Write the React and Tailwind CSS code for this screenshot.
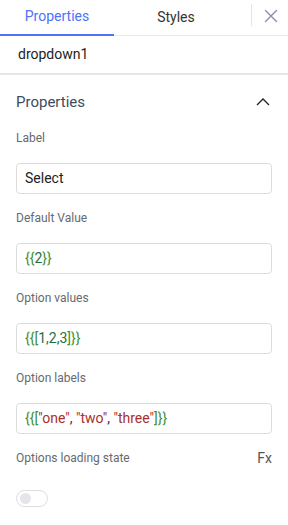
import React from "react";

const font = { fontFamily: "Roboto, 'Noto Sans', sans-serif" };

function Field({ label, children }) {
  return (
    <div className="flex flex-col">
      <div className="h-[16px] text-[12px] leading-[16px] text-[#666a70]">{label}</div>
      <div className="mt-[17px] mb-[16px] h-[31px] rounded-[4px] border border-[#dcdcdc] bg-white flex items-center px-[8px] text-[14px]">
        <span className="whitespace-pre">{children}</span>
      </div>
    </div>
  );
}

const G = ({ children }) => <span className="text-[#3d8f2f]">{children}</span>;
const N = ({ children }) => <span className="text-[#1f6e45]">{children}</span>;
const S = ({ children }) => <span className="text-[#a6302b]">{children}</span>;
const P = ({ children }) => <span className="text-[#333]">{children}</span>;

export default function App() {
  return (
    <div className="w-[288px] h-[525px] bg-white overflow-hidden" style={font}>
      {/* tabs */}
      <div className="relative h-[36px] flex items-stretch border-b border-[#e8e8e8]">
        <div className="w-[114px] flex items-center justify-center text-[14px] text-[#4d73f8] border-b-2 border-[#4d73f8] -mb-[1px] pb-[1px]">
          Properties
        </div>
        <div className="w-[124px] flex items-center justify-center text-[14px] text-[#333]">Styles</div>
        <div className="flex-1 flex items-center">
          <div className="ml-[13px] h-[22px] w-px bg-[#e5e5e5] -mt-[5px]" />
          <div className="flex-1 flex items-center justify-center -mt-[4px] pl-[1px]">
            <svg width="14" height="14" viewBox="0 0 14 14" fill="none" stroke="#8690a8" strokeWidth="1.4" strokeLinecap="round">
              <path d="M1.5 1.5 L12.5 12.5 M12.5 1.5 L1.5 12.5" />
            </svg>
          </div>
        </div>
      </div>
      {/* component name */}
      <div className="h-[39px] flex items-center pl-[18px] text-[14px] text-[#222] border-b-2 border-[#e6e6e6]">
        dropdown1
      </div>
      {/* section */}
      <div className="pl-[15px] pr-[16px] pt-[17px]">
        <div className="h-[20px] flex items-center justify-between pl-[1px]">
          <span className="text-[15px] text-[#3e4c5c]">Properties</span>
          <svg width="14" height="8" viewBox="0 0 14 8" fill="none" stroke="#222" strokeWidth="1.3" className="mr-[2px]">
            <path d="M1 7 L7 1 L13 7" />
          </svg>
        </div>
        <div className="mt-[18px] pl-[1px]">
          <Field label="Label">
            <span className="text-[#222]">Select</span>
          </Field>
          <Field label="Default Value">
            <G>{"{{"}</G>
            <N>2</N>
            <G>{"}}"}</G>
          </Field>
          <Field label="Option values">
            <G>{"{{["}</G>
            <N>1,2,3</N>
            <G>{"]}}"}</G>
          </Field>
          <Field label="Option labels">
            <G>{"{{["}</G>
            <S>"one"</S>
            <P>{", "}</P>
            <S>"two"</S>
            <P>{", "}</P>
            <S>"three"</S>
            <G>{"]}}"}</G>
          </Field>
          <div className="h-[16px] flex items-center justify-between text-[12px] text-[#666a70]">
            <span>Options loading state</span>
            <span className="text-[14px] text-[#555]">Fx</span>
          </div>
          <div className="mt-[24px] w-[32px] h-[17px] rounded-full border border-[#dddddd] bg-white flex items-center pl-[3px]">
            <div className="w-[11px] h-[11px] rounded-full bg-[#e4e6ea]" />
          </div>
        </div>
      </div>
    </div>
  );
}
